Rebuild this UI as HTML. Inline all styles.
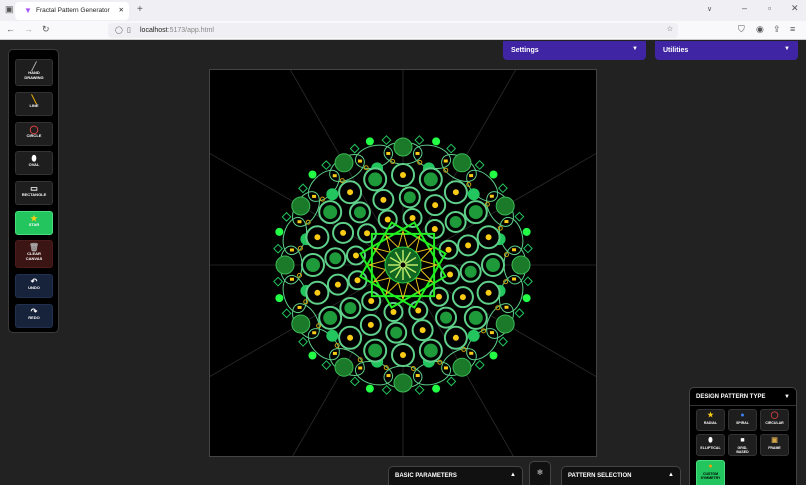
<!DOCTYPE html>
<html><head><meta charset="utf-8"><style>
*{box-sizing:border-box;margin:0;padding:0}
html,body{width:806px;height:485px;overflow:hidden}
body{background:#222;font-family:"Liberation Sans",sans-serif;position:relative}
.tabbar{position:absolute;left:0;top:0;width:806px;height:21px;background:#f0f0f4}
.tab{position:absolute;left:15px;top:2px;width:114px;height:18px;background:#fff;border-radius:4px;font-size:6.5px;color:#222;padding:5px 0 0 21px;white-space:nowrap}
.urlbar{position:absolute;left:0;top:21px;width:806px;height:19px;background:#f9f9fb;border-bottom:1px solid #ccc}
.url{position:absolute;left:108px;top:2px;width:570px;height:15px;background:#f0f0f4;border-radius:4px;font-size:7px;color:#222;padding:4px 0 0 32px}
.url span{color:#888}
.ic{position:absolute;font-size:9px;color:#555}
.dd{position:absolute;top:41px;height:19px;background:#3f24a3;border-radius:0 0 4px 4px;color:#fff;font-size:7px;font-weight:bold;padding:6px 8px}
.dd i{position:absolute;right:8px;top:5px;font-style:normal;font-size:6px}
.tool{position:absolute;left:8px;top:49px;width:51px;height:284px;background:#000;border:1px solid #3a3a3a;border-radius:5px}
.b{position:absolute;left:6px;width:38px;height:24px;background:#1e1e1e;border:1px solid #333;border-radius:3px;color:#fff;font-size:4px;font-weight:bold;text-align:center;line-height:4.5px}
.b .g{display:block;height:11px;font-size:8px;line-height:13px}
.canvas{position:absolute;left:209px;top:69px;width:388px;height:388px;background:#000;border:1px solid #444;overflow:hidden}
.panel{position:absolute;left:689px;top:387px;width:108px;height:98px;background:#000;border:1px solid #444;border-bottom:none;border-radius:5px 5px 0 0;overflow:hidden}
.ph{height:18px;border-bottom:1px solid #333;color:#fff;font-size:6px;font-weight:bold;padding:6px 6px}
.pb{position:absolute;width:29px;height:22px;background:#1e1e1e;border:1px solid #333;border-radius:3px;color:#fff;font-size:3.5px;font-weight:bold;text-align:center;line-height:4px}
.pb .g{display:block;height:11px;font-size:7px;line-height:12px}
.bot{position:absolute;top:466px;height:19px;background:#111;border:1px solid #444;border-bottom:none;border-radius:5px 5px 0 0;color:#fff;font-size:6px;font-weight:bold;padding:6px 6px}
.bot i{position:absolute;right:6px;top:5px;font-style:normal;font-size:6px}
</style></head><body>
<div class="tabbar"><span class="ic" style="left:5px;top:4px">▣</span>
<div class="tab"><span style="position:absolute;left:9px;top:4px;color:#a855f7;font-size:8px">▼</span>Fractal Pattern Generator<span style="position:absolute;right:5px;top:4px">✕</span></div>
<span class="ic" style="left:137px;top:4px;font-size:10px">+</span>
<span class="ic" style="left:707px;top:5px;font-size:7px">∨</span><span class="ic" style="left:742px;top:3px">–</span><span class="ic" style="left:768px;top:3px">▫</span><span class="ic" style="left:791px;top:3px">✕</span></div>
<div class="urlbar"><span class="ic" style="left:6px;top:3px">←</span><span class="ic" style="left:24px;top:3px;color:#aaa">→</span><span class="ic" style="left:42px;top:3px">↻</span>
<div class="url"><span style="position:absolute;left:7px;top:3px;color:#555">◯</span><span style="position:absolute;left:19px;top:3px;color:#555">▯</span>localhost<span>:5173/app.html</span><b style="position:absolute;right:5px;top:2px;color:#555;font-weight:normal">☆</b></div>
<span class="ic" style="left:738px;top:3px">⛉</span><span class="ic" style="left:756px;top:3px">◉</span><span class="ic" style="left:773px;top:3px">⇪</span><span class="ic" style="left:790px;top:3px">≡</span></div>

<div class="dd" style="left:503px;width:143px">Settings<i>▼</i></div>
<div class="dd" style="left:655px;width:143px">Utilities<i>▼</i></div>

<div class="tool">
<div class="b" style="top:9px;height:27px"><span class="g" style="color:#aaa">╱</span>HAND<br>DRAWING</div>
<div class="b" style="top:42px"><span class="g" style="color:#eab308">╲</span>LINE</div>
<div class="b" style="top:72px"><span class="g" style="color:#ef4444">◯</span>CIRCLE</div>
<div class="b" style="top:101px"><span class="g">⬮</span>OVAL</div>
<div class="b" style="top:131px"><span class="g">▭</span>RECTANGLE</div>
<div class="b" style="top:161px;background:#22c55e;border-color:#4ade80"><span class="g" style="color:#facc15">★</span>STAR</div>
<div class="b" style="top:190px;height:28px;background:#3b1414;border-color:#4a1c1c"><span class="g" style="color:#aaa">🗑</span>CLEAR<br>CANVAS</div>
<div class="b" style="top:224px;background:#17223b;border-color:#22304f"><span class="g">↶</span>UNDO</div>
<div class="b" style="top:254px;background:#17223b;border-color:#22304f"><span class="g">↷</span>REDO</div>
</div>

<div class="canvas"><svg id="m" width="386" height="386" viewBox="0 0 386 386"></svg></div>

<div class="panel"><div class="ph">DESIGN PATTERN TYPE<span style="position:absolute;right:6px">▼</span></div>
<div class="pb" style="left:6px;top:21px"><span class="g" style="color:#facc15">★</span>RADIAL</div>
<div class="pb" style="left:38px;top:21px"><span class="g" style="color:#3b82f6">●</span>SPIRAL</div>
<div class="pb" style="left:70px;top:21px"><span class="g" style="color:#ef4444">◯</span>CIRCULAR</div>
<div class="pb" style="left:6px;top:46px"><span class="g">⬮</span>ELLIPTICAL</div>
<div class="pb" style="left:38px;top:46px"><span class="g">■</span>GRID-<br>BASED</div>
<div class="pb" style="left:70px;top:46px"><span class="g" style="color:#d4a84a">▣</span>FRAME</div>
<div class="pb" style="left:6px;top:72px;height:28px;background:#22c55e;border-color:#4ade80;color:#000"><span class="g" style="color:#f59e0b">●</span>CUSTOM<br>SYMMETRY</div>
</div>

<div class="bot" style="left:388px;width:135px">BASIC PARAMETERS<i>▲</i></div>
<div style="position:absolute;left:529px;top:461px;width:22px;height:24px;background:#111;border:1px solid #444;border-bottom:none;border-radius:5px 5px 0 0;color:#ccc;font-size:8px;text-align:center;padding-top:6px">❄</div>
<div class="bot" style="left:561px;width:120px">PATTERN SELECTION<i>▲</i></div>

<script>
var s='',cx=193,cy=195,P=Math.PI;
function pt(r,a){return [cx+r*Math.cos(a),cy+r*Math.sin(a)];}
for(var i=0;i<12;i++){var a=i*P/6,p=pt(30,a),q=pt(280,a);s+='<line x1="'+p[0]+'" y1="'+p[1]+'" x2="'+q[0]+'" y2="'+q[1]+'" stroke="#2c2c2c" stroke-width="0.8"/>';}
for(var i=0;i<24;i++){var a=i*P/12,p=pt(112,a);s+='<ellipse cx="'+p[0]+'" cy="'+p[1]+'" rx="19" ry="11" transform="rotate('+(a*180/P+90)+' '+p[0]+' '+p[1]+')" fill="none" stroke="#5fd08a" stroke-width="1"/>';
var d=pt(112,a+0.13);s+='<rect x="'+(d[0]-2)+'" y="'+(d[1]-2)+'" width="4" height="3" fill="#facc15"/>';
var c=pt(104,a-0.1);s+='<circle cx="'+c[0]+'" cy="'+c[1]+'" r="2" fill="none" stroke="#c9a20f"/>';
var sq=pt(126,a+0.13);s+='<rect x="'+(sq[0]-3)+'" y="'+(sq[1]-3)+'" width="6" height="6" fill="none" stroke="#22c55e" transform="rotate(45 '+sq[0]+' '+sq[1]+')"/>';}
for(var i=0;i<12;i++){var a=i*P/6,p=pt(118,a);s+='<circle cx="'+p[0]+'" cy="'+p[1]+'" r="9" fill="#1a7a2a" stroke="#3cb955"/>';var h=pt(100,a+P/12);s+='<circle cx="'+h[0]+'" cy="'+h[1]+'" r="6" fill="#22c55e"/>';var g=pt(128,a+P/12);s+='<circle cx="'+g[0]+'" cy="'+g[1]+'" r="4" fill="#22ff44"/>';}
var rings=[[90,20,11],[68,16,10],[48,12,9]];
rings.forEach(function(R,k){for(var i=0;i<R[1];i++){var a=i*2*P/R[1]+k*0.1,p=pt(R[0],a);s+='<circle cx="'+p[0]+'" cy="'+p[1]+'" r="'+R[2]+'" fill="#000" stroke="#5fd08a" stroke-width="2"/>';
s+=(i%2==0&&k<2)?'<circle cx="'+p[0]+'" cy="'+p[1]+'" r="'+(R[2]-4)+'" fill="#1f9a3a"/>':'<circle cx="'+p[0]+'" cy="'+p[1]+'" r="3" fill="#facc15"/>';}});
for(var k=0;k<3;k++){var pts=[];for(var j=0;j<4;j++){pts.push(pt(44,j*P/2+k*P/6+P/4).join(','));}s+='<polygon points="'+pts.join(' ')+'" fill="none" stroke="#22ee22" stroke-width="2"/>';}
var sp=[];for(var j=0;j<24;j++){sp.push(pt(j%2?18:34,j*P/12).join(','));}s+='<polygon points="'+sp.join(' ')+'" fill="none" stroke="#e6c21a" stroke-width="1"/>';
s+='<circle cx="'+cx+'" cy="'+cy+'" r="18" fill="#116622" stroke="#22cc44"/>';
for(var j=0;j<12;j++){var p=pt(15,j*P/6);s+='<line x1="'+cx+'" y1="'+cy+'" x2="'+p[0]+'" y2="'+p[1]+'" stroke="#bde86a" stroke-width="1.5"/>';}
s+='<circle cx="'+cx+'" cy="'+cy+'" r="3" fill="#000" stroke="#bde86a"/>';
document.getElementById('m').innerHTML=s;
</script>
</body></html>
